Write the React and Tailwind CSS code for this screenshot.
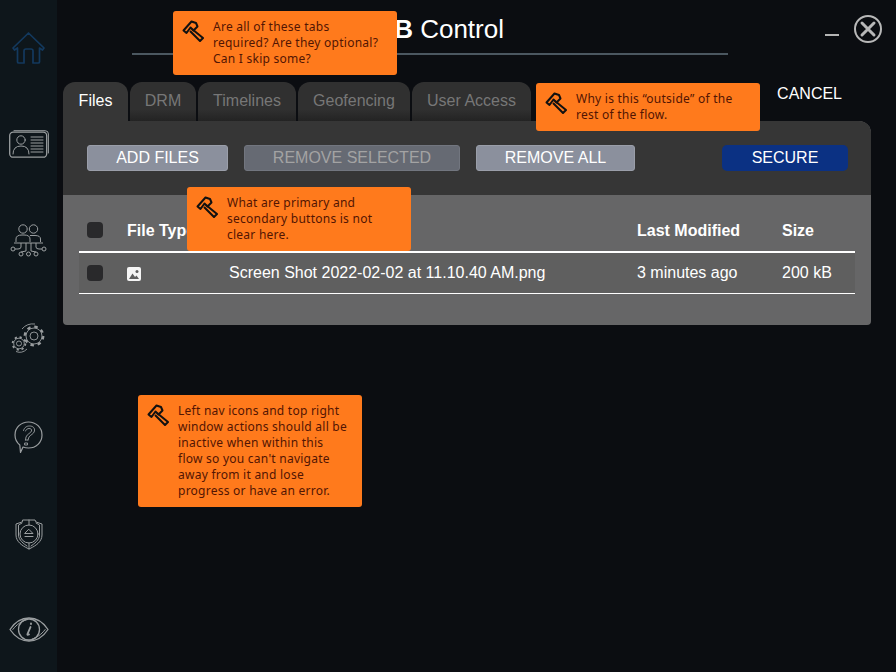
const ICON = "#9a9ea0";

function Home() {
  return (
    <svg width="33" height="32" viewBox="0 0 33 32" fill="none" stroke="#13395e" strokeWidth="1.7" strokeLinejoin="round" strokeLinecap="round">
      <path d="M16.5 1 L1 16 L2.5 18 L5.5 16 V30 Q5.5 31 7 31 H12 V19 Q12 17 14 17 H19 Q21 17 21 19 V31 H26 Q27.5 31 27.5 30 V16 L30.5 18 L32 16 Z" />
    </svg>
  );
}
function Card() {
  return (
    <svg width="40" height="28" viewBox="0 0 40 28" fill="none" stroke={ICON} strokeWidth="1" strokeLinecap="round">
      <rect x="0.7" y="2.2" width="37" height="25" rx="3.5" strokeWidth="1.3" />
      <path d="M5 0.7 H36 Q39.4 0.7 39.4 4 V23" />
      <circle cx="12" cy="10" r="4.2" />
      <path d="M4 24 Q4 16 12 16 Q20 16 20 24" />
      <path d="M22 7 H34 M22 10 H34 M22 13 H34 M22 16 H34 M22 19 H34 M22 22 H34" />
    </svg>
  );
}
function Net() {
  return (
    <svg width="37" height="33" viewBox="0 0 37 33" fill="none" stroke={ICON} strokeWidth="1">
      <circle cx="13" cy="5" r="4.2" />
      <circle cx="23.5" cy="5" r="4.2" />
      <path d="M6 18 V15 Q6 11 12 11 H14 Q20 11 20 15 V18 M20 11.5 H25 Q30.500 11.500 30.500 15 V18" />
      <path d="M4 19 H33" />
      <path d="M11 19 V23 Q11 25 8 25 H5 M16 19 V27 M21 19 V27 M26 19 V23 Q26 25 29 25 H32" />
      <circle cx="3" cy="25" r="2" />
      <circle cx="34" cy="25" r="2" />
      <circle cx="11" cy="30" r="2" />
      <circle cx="18.500" cy="30" r="2" />
      <circle cx="26" cy="30" r="2" />
      <path d="M16 27 L11 28 M21 27 L26 28" />
    </svg>
  );
}
function Gears() {
  return (
    <svg width="35" height="31" viewBox="0 0 35 31" fill="none" stroke={ICON} strokeWidth="0.9">
      <path d="M11 6 Q16 0 24 1" />
      <circle cx="23" cy="13" r="8" />
      <circle cx="23" cy="13" r="9.300" strokeWidth="2.200" strokeDasharray="3.500 3.800" />
      <circle cx="23" cy="13" r="4" />
      <circle cx="8" cy="20.500" r="5.300" />
      <circle cx="8" cy="20.500" r="6.400" strokeWidth="1.800" strokeDasharray="2.200 2.800" />
      <circle cx="8" cy="20.500" r="2.500" />
      <path d="M5 28.500 Q11 31 16 26" />
    </svg>
  );
}
function Question() {
  return (
    <svg width="29" height="32" viewBox="0 0 29 32" fill="none" stroke={ICON} strokeWidth="1.2" strokeLinejoin="round" strokeLinecap="round">
      <path d="M14.500 1 C22 1 28 6.500 28 14 C28 21.500 22 27 14.500 27 C12.500 27 10.500 26.600 9 26 L6.500 31.500 L5.800 24 C2.800 21.500 1 18 1 14 C1 6.500 7 1 14.500 1 Z" />
      <path d="M9.500 9.500 C10.500 6 13 5 15.500 5 C19 5 21 7 20.500 10 C20 13 16 14 15 16 L14 19 M11.500 10 C12 8.500 13.500 7.500 15 7.500 C17 7.500 18 8.500 17.500 10 C17 12 13 13 12 16 L11.500 19 M11.500 19 H14 M11 22 H13.500 V24 H11 Z" strokeWidth="0.9" />
    </svg>
  );
}
function Shield() {
  return (
    <svg width="28" height="31" viewBox="0 0 28 31" fill="none" stroke={ICON} strokeWidth="1" strokeLinejoin="round" strokeLinecap="round">
      <path d="M8 1 H20 L21 3 L27 5 V16 C27 23 20 27 16 29 L14 30 L12 29 C8 27 1 23 1 16 V5 L7 3 Z" />
      <path d="M7 4 L3.500 6 V16 C3.500 21 9 25 12 27 M21 4 L24.500 6 V16 C24.500 21 19 25 16 27" />
      <circle cx="14" cy="15" r="9" />
      <path d="M14 10.500 L18 14.500 H10 Z M10 17.500 H18" />
      <path d="M14 1 V6 M14 24 V30" />
    </svg>
  );
}
function Eye() {
  return (
    <svg width="40" height="25" viewBox="0 0 40 25" fill="none" stroke={ICON} strokeWidth="1.3" strokeLinecap="round" strokeLinejoin="round">
      <path d="M1 12.500 C6 5 12.500 1 20 1 C27.500 1 34 5 39 12.500 C34 20 27.500 24 20 24 C12.500 24 6 20 1 12.500 Z" />
      <path d="M3.800 12.500 C8 7 13 4 17 3 M36.200 12.500 C32 18 27 21 23 22" strokeWidth="1" />
      <circle cx="20" cy="12.500" r="10.500" />
      <path d="M21.500 10 L18.500 17 Q18 18.500 20 17.500 M22 6.500 L22 7" strokeWidth="1.900" />
    </svg>
  );
}
function Hammer() {
  return (
    <svg width="22" height="22" viewBox="0 0 22 22" fill="none" stroke="#111" strokeWidth="2" strokeLinejoin="round" className="absolute left-[9px] top-[9px]">
      <path d="M1.500 10.500 L9.500 1.500 L14 3 L15.500 6.500 L11.500 10.500 L8.500 7.500 L4.500 13 Z" />
      <path d="M10 9 L21 18 L18 21 L8 11" />
    </svg>
  );
}
function ImageIcon() {
  return (
    <svg width="14" height="14" viewBox="0 0 14 14">
      <rect width="14" height="14" rx="2" fill="#f5f5f5" />
      <circle cx="10" cy="4.500" r="1.500" fill="#5f5f5f" />
      <path d="M2 12 L5.500 6.500 L8 10 L9.500 8.500 L12 12 Z" fill="#5f5f5f" />
    </svg>
  );
}

function Note({ className, lines }) {
  return (
    <div className={"absolute w-[224px] rounded-[3px] bg-[#ff7a1c] pl-[40px] pt-[8px] pb-[8px] text-[12px] leading-[16px] text-[#521503] whitespace-nowrap tracking-[0.25px] font-['Noto_Sans',sans-serif] " + className}>
      <Hammer />
      {lines.map((l) => (
        <div key={l}>{l}</div>
      ))}
    </div>
  );
}

const idle = "bg-gradient-to-b from-[#303030] from-70% to-[#232323] text-[#777]";
const tabs = [
  ["Files", "w-[65px] bg-[#363636] text-white"],
  ["DRM", "w-[66px] " + idle],
  ["Timelines", "w-[98px] " + idle],
  ["Geofencing", "w-[112px] " + idle],
  ["User Access", "w-[119px] " + idle],
];

const btn = "h-[26px] rounded-[3px] text-[16px] flex items-center justify-center";
const cols = "grid grid-cols-[40px_102px_408px_145px_1fr] items-center pl-[8px]";
const Check = () => <div className="w-[16px] h-[16px] rounded-[4px] bg-[#29292b]" />;

export default function App() {
  return (
    <div className="relative flex w-[896px] h-[672px] overflow-hidden bg-[#0b0d11] font-['Liberation_Sans',sans-serif] text-white">
      <nav className="w-[57px] h-full shrink-0 bg-[#0e161b] flex flex-col items-center pt-[32px]">
        <Home />
        <div className="mt-[66px]"><Card /></div>
        <div className="mt-[66px]"><Net /></div>
        <div className="mt-[66px]"><Gears /></div>
        <div className="mt-[67px]"><Question /></div>
        <div className="mt-[66px]"><Shield /></div>
        <div className="mt-[67px]"><Eye /></div>
      </nav>

      <main className="flex-1 min-w-0">
        <header className="h-[82px] flex items-start pl-[75px]">
          <div className="w-[596px] h-[55px] border-b-2 border-[#4b5760] flex items-center justify-end pr-[224px] pt-[4px] text-[26px] leading-[30px]">
            <span><b>B</b> Control</span>
          </div>
          <div className="w-[14px] h-[2px] bg-[#b5b5b5] ml-[97px] mt-[34px]" />
          <svg width="28" height="28" viewBox="0 0 28 28" fill="none" stroke="#b8b8b8" className="ml-[15px] mt-[15px]">
            <circle cx="14" cy="14" r="13" strokeWidth="2" />
            <path d="M8 8 L20 20 M20 8 L8 20" strokeWidth="3" strokeLinecap="round" />
          </svg>
        </header>

        <section className="ml-[6px] w-[808px]">
          <div className="flex items-start justify-between h-[39px] pr-[29px]">
            <div className="flex gap-[2px]">
              {tabs.map(([t, c]) => (
                <div key={t} className={"h-[39px] pb-[2px] rounded-t-[12px] text-[16px] flex items-center justify-center " + c}>{t}</div>
              ))}
            </div>
            <div className="text-[16px] leading-[20px] mt-[2px]">CANCEL</div>
          </div>

          <div className="rounded-tr-[12px] rounded-b-[4px] overflow-hidden bg-[#666667]">
            <div className="h-[74px] bg-[#363636] pt-[24px] pl-[24px] pr-[23px] flex items-start">
              <div className={btn + " w-[141px] bg-[#8b909d] border border-[#9a9ea9]"}>ADD FILES</div>
              <div className={btn + " w-[216px] ml-[16px] bg-[#666a73] border border-[#72767f] text-[#a3a3a3]"}>REMOVE SELECTED</div>
              <div className={btn + " w-[159px] ml-[16px] bg-[#8b909d] border border-[#9a9ea9]"}>REMOVE ALL</div>
              <div className={btn + " w-[126px] ml-auto bg-[#0b3183] rounded-[5px]"}>SECURE</div>
            </div>
            <div className="px-[16px] pt-[14px] h-[130px]">
              <div className={cols + " h-[42px] border-b-2 border-white text-[16px] font-bold box-content"}>
                <Check />
                <div className="pt-[2px]">File Type</div>
                <div />
                <div className="pt-[2px]">Last Modified</div>
                <div className="pt-[2px]">Size</div>
              </div>
              <div className={cols + " h-[41px] bg-[#5f5f5f] border-b border-white text-[16px]"}>
                <Check />
                <div className="pt-[2px]"><ImageIcon /></div>
                <div>Screen Shot 2022-02-02 at 11.10.40 AM.png</div>
                <div>3 minutes ago</div>
                <div>200 kB</div>
              </div>
            </div>
          </div>
        </section>
      </main>

      <Note className="left-[173px] top-[11px]" lines={["Are all of these tabs", "required? Are they optional?", "Can I skip some?"]} />
      <Note className="left-[536px] top-[83px]" lines={["Why is this “outside” of the", "rest of the flow."]} />
      <Note className="left-[187px] top-[187px]" lines={["What are primary and", "secondary buttons is not", "clear here."]} />
      <Note className="left-[138px] top-[395px]" lines={["Left nav icons and top right", "window actions should all be", "inactive when within this", "flow so you can't navigate", "away from it and lose", "progress or have an error."]} />
    </div>
  );
}
